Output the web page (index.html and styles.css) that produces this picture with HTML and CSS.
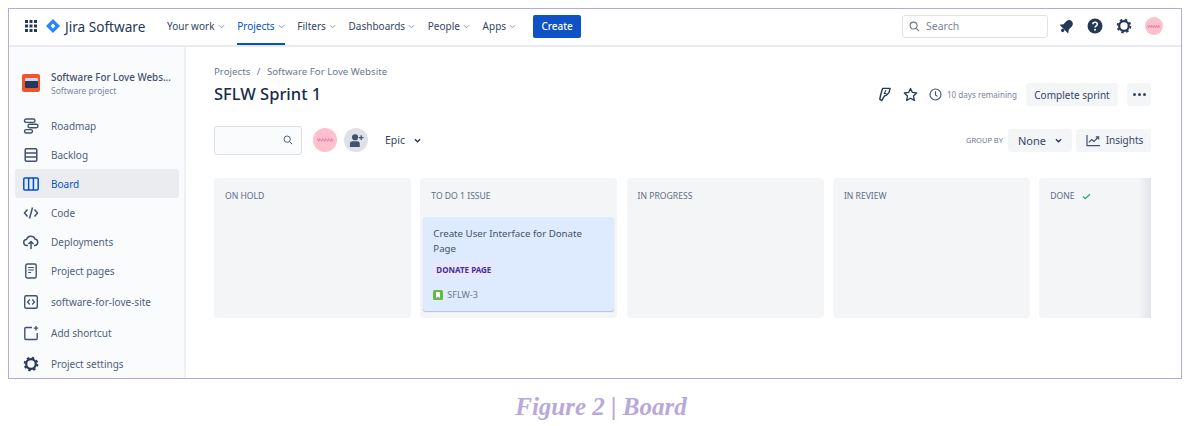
FILE: index.html
```html
<!DOCTYPE html>
<html lang="en">
<head>
  <meta charset="UTF-8">
  <title>Figure 2 | Board</title>
  <link rel="stylesheet" href="styles.css">
</head>
<body>
  <div class="frame">
    <header class="topbar">
      <svg class="icon apps" viewBox="0 0 14 14"><g fill="#253858"><rect x="1" y="1" width="3" height="3"/><rect x="5.500" y="1" width="3" height="3"/><rect x="10" y="1" width="3" height="3"/><rect x="1" y="5.500" width="3" height="3"/><rect x="5.500" y="5.500" width="3" height="3"/><rect x="10" y="5.500" width="3" height="3"/><rect x="1" y="10" width="3" height="3"/><rect x="5.500" y="10" width="3" height="3"/><rect x="10" y="10" width="3" height="3"/></g></svg>
      <div class="logo">
        <svg class="icon" viewBox="0 0 14 14" width="14" height="14"><path d="M7 0l7 7-7 7-7-7z" fill="#2684ff"/><path d="M7 4.600L9.400 7 7 9.400 4.600 7z" fill="#fff"/></svg>
        <span>Jira Software</span>
      </div>
      <nav class="nav">
        <a class="nav-item">Your work <svg class="caret" viewBox="0 0 8 5"><path d="M1 1l3 3 3-3" fill="none" stroke="#8993a4" stroke-width="1.100"/></svg></a>
        <a class="nav-item active">Projects <svg class="caret" viewBox="0 0 8 5"><path d="M1 1l3 3 3-3" fill="none" stroke="#6b8fd6" stroke-width="1.100"/></svg></a>
        <a class="nav-item">Filters <svg class="caret" viewBox="0 0 8 5"><path d="M1 1l3 3 3-3" fill="none" stroke="#8993a4" stroke-width="1.100"/></svg></a>
        <a class="nav-item">Dashboards <svg class="caret" viewBox="0 0 8 5"><path d="M1 1l3 3 3-3" fill="none" stroke="#8993a4" stroke-width="1.100"/></svg></a>
        <a class="nav-item">People <svg class="caret" viewBox="0 0 8 5"><path d="M1 1l3 3 3-3" fill="none" stroke="#8993a4" stroke-width="1.100"/></svg></a>
        <a class="nav-item">Apps <svg class="caret" viewBox="0 0 8 5"><path d="M1 1l3 3 3-3" fill="none" stroke="#8993a4" stroke-width="1.100"/></svg></a>
      </nav>
      <button class="create">Create</button>
      <div class="search">
        <svg class="icon" viewBox="0 0 12 12" width="11" height="11"><circle cx="5" cy="5" r="3.800" fill="none" stroke="#6b778c" stroke-width="1.200"/><path d="M8 8l3 3" stroke="#6b778c" stroke-width="1.200"/></svg>
        <span>Search</span>
      </div>
      <div class="top-icons">
        <svg class="icon" viewBox="0 0 16 16" width="15" height="15"><g transform="rotate(45 8 8)" fill="#253858"><path d="M8 0C5.200 0 4 2.200 4 5v3.500L1.500 12h13L12 8.500V5c0-2.800-1.200-5-4-5z"/><circle cx="8" cy="13.800" r="1.800"/></g></svg>
        <svg class="icon" viewBox="0 0 16 16" width="16" height="16"><circle cx="8" cy="8" r="7.500" fill="#253858"/><path d="M5.800 6.200C5.800 5 6.800 4.200 8 4.200s2.300.8 2.300 2c0 1.600-2.200 1.600-2.200 3.300" fill="none" stroke="#fff" stroke-width="1.500"/><circle cx="8" cy="11.700" r="1" fill="#fff"/></svg>
        <svg class="icon" viewBox="0 0 16 16" width="16" height="16"><circle cx="8" cy="8" r="4.800" fill="none" stroke="#253858" stroke-width="2.200"/><circle cx="8" cy="8" r="6.400" fill="none" stroke="#253858" stroke-width="1.800" stroke-dasharray="2.500 2.527"/></svg>
        <span class="avatar small"><svg viewBox="0 0 24 8" width="14" height="5"><path d="M1 2l2 4 1-4 3 4 1-4 3 4 1-4 3 4 1-4 3 4 1-4 2 4" fill="none" stroke="#c9788c" stroke-width="1.200"/></svg></span>
      </div>
    </header>
    <div class="body">
      <aside class="sidebar">
        <div class="project">
          <span class="project-logo"><span></span></span>
          <div>
            <div class="project-name">Software For Love Webs...</div>
            <div class="project-type">Software project</div>
          </div>
        </div>
        <ul class="menu">
          <li>
            <svg class="icon" viewBox="0 0 16 16" width="16" height="16"><g fill="none" stroke="#42526e" stroke-width="1.400"><rect x="1.500" y="1" width="10.500" height="3.400" rx="1.700"/><rect x="5" y="6.300" width="10" height="3.400" rx="1.700"/><rect x="1.500" y="11.600" width="8" height="3.400" rx="1.700"/></g></svg>
            Roadmap
          </li>
          <li>
            <svg class="icon" viewBox="0 0 16 16" width="16" height="16"><path d="M3 1.800h10l.8 1v3.200H2.200V2.800zM2.200 6h11.600v4H2.200zM2.200 10h11.600v3.200l-.8 1H3l-.8-1z" fill="none" stroke="#42526e" stroke-width="1.500"/></svg>
            Backlog
          </li>
          <li class="current">
            <svg class="icon" viewBox="0 0 16 16" width="16" height="16"><rect x=".8" y="2" width="14.400" height="12" rx="1" fill="none" stroke="#0052cc" stroke-width="1.500"/><path d="M5.600 2v12M10.400 2v12" stroke="#0052cc" stroke-width="1.500"/></svg>
            Board
          </li>
          <li>
            <svg class="icon" viewBox="0 0 16 16" width="16" height="16"><path d="M4.500 4.500L1.500 8l3 3.500M11.500 4.500l3 3.500-3 3.500M9.500 2.500l-3 11" fill="none" stroke="#42526e" stroke-width="1.500"/></svg>
            Code
          </li>
          <li>
            <svg class="icon" viewBox="0 0 16 16" width="16" height="16"><path d="M5 11.500H4a3 3 0 0 1-.5-6A4.500 4.500 0 0 1 12 5a3.300 3.300 0 0 1 0 6.500h-1" fill="none" stroke="#42526e" stroke-width="1.500"/><path d="M8 15V8M5.500 10L8 7.500l2.500 2.500" fill="none" stroke="#42526e" stroke-width="1.500"/></svg>
            Deployments
          </li>
          <li>
            <svg class="icon" viewBox="0 0 16 16" width="16" height="16"><rect x="2.800" y="1" width="10.400" height="14" rx="1.500" fill="none" stroke="#42526e" stroke-width="1.400"/><path d="M5.200 4.500h5.600M5.200 7h5.600M5.200 9.500h3" stroke="#42526e" stroke-width="1.200"/></svg>
            Project pages
          </li>
          <li class="gap-up">
            <svg class="icon" viewBox="0 0 16 16" width="16" height="16"><rect x="1.700" y="1.700" width="12.600" height="12.600" rx="1.500" fill="none" stroke="#42526e" stroke-width="1.400"/><path d="M6.800 5.500L4.500 8l2.300 2.500M9.200 5.500L11.500 8l-2.300 2.500" fill="none" stroke="#42526e" stroke-width="1.300"/></svg>
            software-for-love-site
          </li>
          <li class="gap-up">
            <svg class="icon" viewBox="0 0 16 16" width="16" height="16"><path d="M9 2.500H3a1.200 1.200 0 0 0-1.200 1.200v9.600A1.200 1.200 0 0 0 3 14.500h10a1.200 1.200 0 0 0 1.200-1.200V8" fill="none" stroke="#42526e" stroke-width="1.400"/><path d="M13 1v4.400M10.800 3.200h4.400" stroke="#42526e" stroke-width="1.300"/></svg>
            Add shortcut
          </li>
          <li class="gap-up">
            <svg class="icon" viewBox="0 0 16 16" width="16" height="16"><circle cx="8" cy="8" r="4.800" fill="none" stroke="#253858" stroke-width="2.200"/><circle cx="8" cy="8" r="6.400" fill="none" stroke="#253858" stroke-width="1.800" stroke-dasharray="2.500 2.527"/></svg>
            Project settings
          </li>
        </ul>
      </aside>
      <main class="main">
        <div class="crumbs"><span>Projects</span><span>/</span><span>Software For Love Website</span></div>
        <div class="title-row">
          <h1>SFLW Sprint 1</h1>
          <div class="sprint-tools">
            <svg class="icon" viewBox="0 0 16 16" width="15" height="15"><path d="M6 1.500h8L12.800 6 10 8.800l-2 .7L5 14.500 3 13l1-5z" fill="none" stroke="#253858" stroke-width="1.500" stroke-linejoin="round"/><path d="M9.500 3.500L7.800 7h2.400" fill="none" stroke="#253858" stroke-width="1.100"/></svg>
            <svg class="icon star" viewBox="0 0 16 16" width="15" height="15"><path d="M8 1.500l2 4.300 4.600.6-3.400 3.200.9 4.700L8 12l-4.100 2.300.9-4.700L1.400 6.400 6 5.800z" fill="none" stroke="#253858" stroke-width="1.400" stroke-linejoin="round"/></svg>
            <svg class="icon clock" viewBox="0 0 14 14" width="13" height="13"><circle cx="7" cy="7" r="5.900" fill="none" stroke="#42526e" stroke-width="1.200"/><path d="M7 3.500V7.500L9.200 9" fill="none" stroke="#42526e" stroke-width="1.200"/></svg>
            <span class="remaining">10 days remaining</span>
            <button class="btn complete">Complete sprint</button>
            <button class="btn dots"><i></i><i></i><i></i></button>
          </div>
        </div>
        <div class="filter-row">
          <div class="filter-search">
            <svg class="icon" viewBox="0 0 12 12" width="10" height="10"><circle cx="5" cy="5" r="3.800" fill="none" stroke="#42526e" stroke-width="1.100"/><path d="M8 8l3 3" stroke="#42526e" stroke-width="1.200"/></svg>
          </div>
          <span class="avatar"><svg viewBox="0 0 24 8" width="19" height="6"><path d="M1 2l2 4 1-4 3 4 1-4 3 4 1-4 3 4 1-4 3 4 1-4 2 4" fill="none" stroke="#c9788c" stroke-width="1"/></svg></span>
          <span class="add-person">
            <svg viewBox="0 0 16 16" width="15" height="15"><circle cx="6.500" cy="4.500" r="3.300" fill="#42526e"/><path d="M1 15v-3.500C1 9.500 2.500 8.800 4 8.800h5c1.500 0 2.500 1 2.500 2.700V15z" fill="#42526e"/><path d="M13 2.500v5M10.500 5h5" stroke="#42526e" stroke-width="1.400"/></svg>
          </span>
          <span class="epic">Epic <svg class="chev" viewBox="0 0 8 5"><path d="M1 1l3 3 3-3" fill="none" stroke="#253858" stroke-width="1.500"/></svg></span>
          <span class="group-label">GROUP BY</span>
          <button class="btn none">None <svg class="chev" viewBox="0 0 8 5"><path d="M1 1l3 3 3-3" fill="none" stroke="#253858" stroke-width="1.500"/></svg></button>
          <button class="btn insights">
            <svg viewBox="0 0 16 14" width="15" height="13"><path d="M1 1v11.500h14" fill="none" stroke="#42526e" stroke-width="1.300"/><path d="M3 9l3-3 2.500 2L13 3.500M10.500 3H13.500V6" fill="none" stroke="#42526e" stroke-width="1.300"/></svg>
            Insights
          </button>
        </div>
        <div class="board">
          <section class="column"><h2>ON HOLD</h2></section>
          <section class="column">
            <h2>TO DO 1 ISSUE</h2>
            <article class="card">
              <p>Create User Interface for Donate Page</p>
              <span class="tag">DONATE PAGE</span>
              <div class="key">
                <svg viewBox="0 0 10 10" width="10" height="10"><rect width="10" height="10" rx="1.500" fill="#65ba43"/><path d="M3 2h4v6L5 6.600 3 8z" fill="#fff"/></svg>
                SFLW-3
              </div>
            </article>
          </section>
          <section class="column"><h2>IN PROGRESS</h2></section>
          <section class="column"><h2>IN REVIEW</h2></section>
          <section class="column done">
            <h2>DONE <svg viewBox="0 0 10 8" width="9" height="7"><path d="M1 4l2.500 2.500L9 1.500" fill="none" stroke="#36a07c" stroke-width="1.500"/></svg></h2>
          </section>
        </div>
      </main>
    </div>
  </div>
  <p class="caption">Figure 2 | Board</p>
</body>
</html>
```

FILE: styles.css
```css
* {
  box-sizing: border-box;
}
body {
  margin: 0;
  background: #fff;
  font-family: "Noto Sans", Arial, sans-serif;
  color: #42526e;
  height: 426px;
  overflow: hidden;
  padding: 8px 12px 0 8px;
}
button {
  font-family: inherit;
  border: none;
}
.icon {
  flex: none;
  display: block;
}
.frame {
  height: 371px;
  border: 1.5px solid #b9a8da;
  overflow: hidden;
  display: flex;
  flex-direction: column;
}

/* top bar */
.topbar {
  height: 38px;
  flex: none;
  display: flex;
  align-items: center;
  padding: 0 18px 2px 15px;
  background: #fff;
  border-bottom: 2px solid #e8eaef;
}
.apps {
  width: 14px;
  height: 14px;
}
.logo {
  display: flex;
  align-items: center;
  gap: 5px;
  margin-left: 8px;
  width: 106px;
  font-size: 13.600px;
  color: #253858;
  white-space: nowrap;
}
.nav {
  display: flex;
  height: 36px;
  gap: 12.700px;
  margin: 2px 0 0 15px;
}
.nav-item {
  display: flex;
  align-items: center;
  gap: 3px;
  font-size: 10px;
  color: #344563;
  white-space: nowrap;
  border-bottom: 2px solid transparent;
}
.nav-item.active {
  color: #0052cc;
  border-bottom-color: #0052cc;
}
.caret {
  width: 7px;
  height: 5px;
}
.create {
  width: 48px;
  height: 23px;
  margin-left: 17px;
  background: #0e52c6;
  color: #fff;
  border-radius: 2px;
  font-size: 10px;
  font-weight: 500;
  padding: 0;
}
.search {
  margin-left: auto;
  width: 146px;
  height: 23px;
  display: flex;
  align-items: center;
  gap: 6px;
  padding: 0 6px;
  background: #fff;
  border: 1.5px solid #dfe1e9;
  border-radius: 3px;
  font-size: 10.500px;
  color: #7a869a;
}
.top-icons {
  display: flex;
  align-items: center;
  gap: 13px;
  margin-left: 11px;
}
.avatar {
  width: 24px;
  height: 24px;
  flex: none;
  border-radius: 50%;
  background: #ffc0cd;
  display: flex;
  align-items: center;
  justify-content: center;
  overflow: hidden;
}
.avatar.small {
  width: 18px;
  height: 18px;
}

/* sidebar */
.body {
  flex: 1;
  display: flex;
  min-height: 0;
}
.sidebar {
  width: 177px;
  flex: none;
  background: #fafbfd;
  border-right: 2px solid #eff0f3;
  padding: 0 5px 0 6px;
}
.project {
  display: flex;
  align-items: center;
  gap: 11px;
  height: 64px;
  padding: 8px 0 0 7px;
}
.project-logo {
  width: 18px;
  height: 18px;
  border-radius: 2px;
  background: #f0532d;
  display: flex;
  align-items: center;
  justify-content: center;
  flex: none;
}
.project-logo span {
  width: 13px;
  height: 10px;
  border-radius: 1px;
  background: #253858;
  border-top: 3px solid #c9d5ea;
}
.project-name {
  font-size: 9.800px;
  font-weight: 500;
  color: #42526e;
  white-space: nowrap;
}
.project-type {
  font-size: 8.500px;
  color: #7a869a;
  margin-top: 1px;
}
.menu {
  list-style: none;
  margin: 0;
  padding: 0;
}
.menu li {
  height: 29px;
  display: flex;
  align-items: center;
  gap: 12px;
  padding-left: 8px;
  font-size: 10px;
  color: #505f79;
  white-space: nowrap;
  border-radius: 3px;
}
.menu li.current {
  background: #ebecf0;
  color: #0052cc;
}
.menu li.gap-up {
  margin-top: 2px;
}

/* main */
.main {
  flex: 1;
  min-width: 0;
  padding: 18px 30px 0 28px;
  overflow: hidden;
  background: #fff;
}
.crumbs {
  display: flex;
  gap: 6.500px;
  font-size: 9.700px;
  color: #6b778c;
  line-height: 14px;
}
.title-row {
  display: flex;
  align-items: center;
  justify-content: space-between;
  height: 28px;
}
h1 {
  margin: 0;
  font-size: 16.500px;
  font-weight: 500;
  color: #172b4d;
}
.sprint-tools {
  display: flex;
  align-items: center;
  margin-top: 3px;
}
.star {
  margin-left: 11px;
}
.clock {
  margin-left: 11px;
}
.remaining {
  font-size: 8.100px;
  color: #7a869a;
  margin-left: 5px;
  margin-right: 9px;
}
.btn {
  background: #f4f5f7;
  color: #344563;
  border-radius: 3px;
  height: 23px;
  font-size: 10px;
  padding: 0;
  display: flex;
  align-items: center;
  justify-content: center;
}
.complete {
  width: 92px;
}
.dots {
  width: 24px;
  gap: 2px;
  margin-left: 9px;
}
.dots i {
  width: 3px;
  height: 3px;
  border-radius: 50%;
  background: #344563;
}
.filter-row {
  display: flex;
  align-items: center;
  margin-top: 19px;
  height: 28px;
}
.filter-search {
  width: 88px;
  height: 29px;
  background: #fafbfc;
  border: 1.5px solid #dfe1e6;
  border-radius: 3px;
  display: flex;
  align-items: center;
  justify-content: flex-end;
  padding-right: 8px;
  margin-right: 11px;
}
.add-person {
  width: 24px;
  height: 24px;
  border-radius: 50%;
  background: #dfe1e6;
  display: flex;
  align-items: center;
  justify-content: center;
  margin-left: 7px;
}
.epic {
  display: flex;
  align-items: center;
  gap: 9px;
  margin-left: 17px;
  font-size: 10.500px;
  color: #344563;
}
.chev {
  width: 7px;
  height: 5px;
}
.group-label {
  margin-left: auto;
  font-size: 7.500px;
  color: #6b778c;
  margin-right: 5px;
}
.none {
  width: 64px;
  gap: 9px;
  font-size: 11px;
}
.insights {
  width: 75px;
  gap: 5px;
  padding-left: 2px;
  margin-left: 4px;
}

/* board */
.board {
  display: flex;
  gap: 9.300px;
  margin-top: 24px;
  width: 937px;
  overflow: hidden;
}
.column {
  flex: none;
  width: 197px;
  height: 140px;
  background: #f4f5f7;
  border-radius: 4px;
  padding: 3px;
}
.column h2 {
  margin: 0;
  height: 30px;
  padding: 9px 0 0 8px;
  font-size: 8.600px;
  font-weight: 400;
  color: #5e6c84;
}
.column.done {
  position: relative;
}
.column.done h2 {
  display: flex;
  align-items: flex-start;
  gap: 8px;
}
.column.done h2 svg {
  margin-top: 3px;
}
.column.done::after {
  content: "";
  position: absolute;
  top: 0;
  left: 100px;
  width: 12px;
  height: 100%;
  background: linear-gradient(to right, rgba(200, 203, 215, 0), rgba(200, 203, 215, 0.4));
}
.card {
  margin-top: 6px;
  height: 94px;
  background: #deebff;
  border-radius: 3px;
  box-shadow: 0 1px 1px rgba(9, 30, 66, 0.25);
  padding: 10px 10px 9px;
}
.card p {
  margin: 0;
  max-width: 160px;
  font-size: 9.700px;
  line-height: 14.500px;
  color: #42526e;
}
.tag {
  display: inline-block;
  margin-top: 3px;
  padding: 2px 3px;
  font-size: 8px;
  font-weight: 700;
  line-height: 10px;
  color: #403294;
  background: #eae6ff;
  border-radius: 2px;
}
.key {
  display: flex;
  align-items: center;
  gap: 4px;
  margin-top: 10px;
  font-size: 9px;
  color: #6b778c;
}

.caption {
  margin: 14px 0 0;
  padding-left: 12px;
  text-align: center;
  font-family: "Liberation Serif", "Times New Roman", serif;
  font-size: 25px;
  line-height: 28px;
  font-weight: 700;
  font-style: italic;
  color: #b9a8da;
}
```
